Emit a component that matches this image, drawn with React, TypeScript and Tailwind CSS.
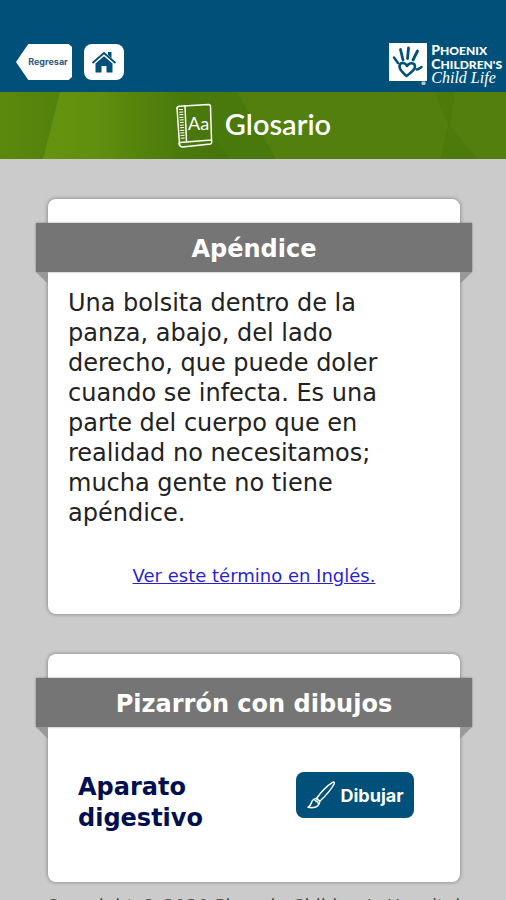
import { ReactNode } from "react";

const HomeIcon = () => (
  <svg viewBox="0 0 26 24" className="h-6 w-[26px]" fill="#00507a" aria-hidden="true">
    <path d="M17 2h3.500v6L17 5z" />
    <path d="M1.500 13 13 3l11.500 10" fill="none" stroke="#00507a" strokeWidth="1.800" />
    <path d="M4.500 13.500 13 6.300l8.500 7.200V22.500h-6V16h-5v6.500h-6z" />
  </svg>
);

const HandLogo = () => (
  <svg viewBox="0 0 38 42" className="h-[42px] w-[38px] shrink-0" aria-hidden="true">
    <rect width="38" height="38" fill="white" />
    <rect x="32.500" y="38.500" width="4" height="3.500" rx="1" fill="white" opacity="0.7" />
    <g fill="none" stroke="#00507a" strokeLinecap="round" strokeLinejoin="round">
      <path d="M14 17 11.500 6.500M18.500 15.500 19.500 5M24 17 28.500 8" strokeWidth="2.800" />
      <path d="M9 20 5 14.500M27.500 26.500c2.500-.2 3.500-1.500 5-2.500" strokeWidth="2.500" />
      <path d="M17.500 33c-4-3.500-7-6-7-9.500 0-4.500 5.500-4.500 7.500-.5 2.500-4 8-3.500 8 .5 0 3.500-4.500 6.500-8.500 9.500z" strokeWidth="2.600" />
    </g>
  </svg>
);

const GlossaryIcon = () => (
  <svg viewBox="0 0 38 46" className="h-[46px] w-[38px]" fill="none" stroke="white" strokeWidth="1.500" strokeLinecap="round" strokeLinejoin="round" aria-hidden="true">
    <path d="M2 5.500c0-1.500 1-2 2.500-2.200L33.500 1.500c1.500 0 2 .5 2 2l1 33.500-32 2.500" />
    <path d="M2 5 4.500 41c.2 2 1 3 3 3l28-3c1.200-.2 1.500-2 1-4M4.500 39.500c-.8 1.200-.5 2.500 1 3.500M10 3l1.500 36" />
    <path d="m6 6 1.800 31" strokeWidth="4" strokeDasharray="1 1.600" strokeLinecap="butt" />
    <text x="13" y="27" fill="white" stroke="none" className="font-['Lato',sans-serif] text-[18px]">Aa</text>
  </svg>
);

const BrushIcon = () => (
  <svg viewBox="0 0 30 30" className="h-[30px] w-[30px]" fill="none" stroke="white" strokeWidth="1.500" strokeLinecap="round" strokeLinejoin="round" aria-hidden="true">
    <path d="M10.500 18.500C15 12 20 6.500 26.500 2.300c1.500-.8 2.300.2 1.600 1.700C24.500 10.500 19.500 16 13.800 21.300z" />
    <path d="M10.500 18.500c-3 .2-4.500 2-5.200 4.500-.4 1.700-1.300 3-3.300 4.300 3.500.7 7.500.4 9.800-1.500 1.300-1.200 1.900-2.700 2-4.500z" />
    <path d="M9 20.500c2 .5 3 1.500 3.500 3.200" />
  </svg>
);

const BannerPattern = () => (
  <svg viewBox="0 0 506 67" preserveAspectRatio="none" className="absolute inset-0 h-full w-full" aria-hidden="true">
    <defs>
      <linearGradient id="leaf">
        <stop offset="0" stopColor="#67940f" />
        <stop offset="0.300" stopColor="#608e0e" />
        <stop offset="0.700" stopColor="#4b7b0b" />
        <stop offset="1" stopColor="#44740b" />
      </linearGradient>
      <linearGradient id="edge">
        <stop offset="0" stopColor="#5b890d" />
        <stop offset="1" stopColor="#52820d" />
      </linearGradient>
    </defs>
    <rect width="506" height="67" fill="#527f0d" />
    <path d="M0 0h60L43 67H0z" fill="url(#edge)" />
    <path d="M60 0h120l51 67H43z" fill="url(#leaf)" />
    <path d="M180 0h57l39 67h-45z" fill="#49790c" />
    <path d="M435 0h20l-5 33 27 34h-37l8-34z" fill="#4c7b0c" />
  </svg>
);

interface RibbonCardProps {
  title: string
  children: ReactNode
}

const RibbonCard = ({ title, children }: RibbonCardProps) => {
  return (
    <section className="rounded-lg bg-white pt-6 shadow-[0_0_4px_rgba(0,0,0,0.4)]">
      <div className="relative -mx-3">
        <h2 className="bg-[#757575] pt-1 text-center text-2xl leading-[45px] font-bold text-white shadow-[0_0_2px_rgba(0,0,0,0.4)]">{title}</h2>
        <span className="absolute top-full left-0 h-3 w-3 bg-[#999999] [clip-path:polygon(0_0,100%_0,100%_100%)]" />
        <span className="absolute top-full right-0 h-3 w-3 bg-[#999999] [clip-path:polygon(0_0,100%_0,0_100%)]" />
      </div>
      {children}
    </section>
  );
};

const Header = () => {
  return (
    <header className="flex h-[92px] items-end justify-between bg-[#00507a] pr-1 pl-4">
      <div className="flex gap-3 pb-3">
        <button className="h-9 w-14 bg-white pl-2 font-['Inter',sans-serif] text-[9px] font-bold text-[#33587a] [clip-path:polygon(0_50%,22%_0,94%_0,100%_8%,100%_92%,94%_100%,22%_100%)]">
          Regresar
        </button>
        <button aria-label="Inicio" className="flex h-9 w-10 items-center justify-center rounded-lg bg-white">
          <HomeIcon />
        </button>
      </div>
      <div className="flex items-start gap-1 pb-[7px] text-white">
        <HandLogo />
        <div className="font-['Lato',sans-serif] text-xs leading-[13px] font-black">
          <p className="uppercase first-letter:text-[14px]">Phoenix</p>
          <p className="uppercase first-letter:text-[14px]">Children's</p>
          <p className="font-['Liberation_Serif',serif] text-base leading-[14px] font-normal italic">Child Life</p>
        </div>
      </div>
    </header>
  );
};

const App = () => {
  return (
    <div className="h-screen overflow-y-auto bg-[#cbcbcb] font-['DejaVu_Sans',Verdana,sans-serif] [scrollbar-width:none]">
      <Header />
      <div className="relative h-[67px]">
        <BannerPattern />
        <div className="relative flex h-full items-center justify-center gap-3 text-white">
          <GlossaryIcon />
          <h1 className="pb-1 font-['Lato',sans-serif] text-[29px] font-semibold">Glosario</h1>
        </div>
      </div>
      <main className="flex flex-col gap-10 pt-10 pr-[46px] pl-12">
        <RibbonCard title="Apéndice">
          <p className="pt-4 pr-12 pl-5 text-2xl leading-[30px] text-[#222222]">
            Una bolsita dentro de la panza, abajo, del lado derecho, que puede doler cuando se infecta. Es una parte del cuerpo que en realidad no necesitamos; mucha gente no tiene apéndice.
          </p>
          <p className="pt-9 pb-[26px] text-center text-[18px] leading-6">
            <a href="#ingles" className="text-[#2a1fd0] underline">Ver este término en Inglés.</a>
          </p>
        </RibbonCard>
        <RibbonCard title="Pizarrón con dibujos">
          <div className="flex items-start justify-between pt-[45px] pr-[46px] pb-12 pl-[30px]">
            <h3 className="w-40 text-2xl leading-[31px] font-bold text-[#02104f]">Aparato digestivo</h3>
            <button className="flex h-[46px] w-[118px] items-center justify-center gap-1 rounded-lg bg-[#00507a] font-['Inter',sans-serif] text-[18px] font-bold text-white">
              <BrushIcon />
              Dibujar
            </button>
          </div>
        </RibbonCard>
      </main>
      <footer className="px-8 pt-3 pb-4 text-center text-[18px] leading-6 text-[#555555]">
        Copyright © 2020 Phoenix Children's Hospital
      </footer>
    </div>
  );
};

export default App
